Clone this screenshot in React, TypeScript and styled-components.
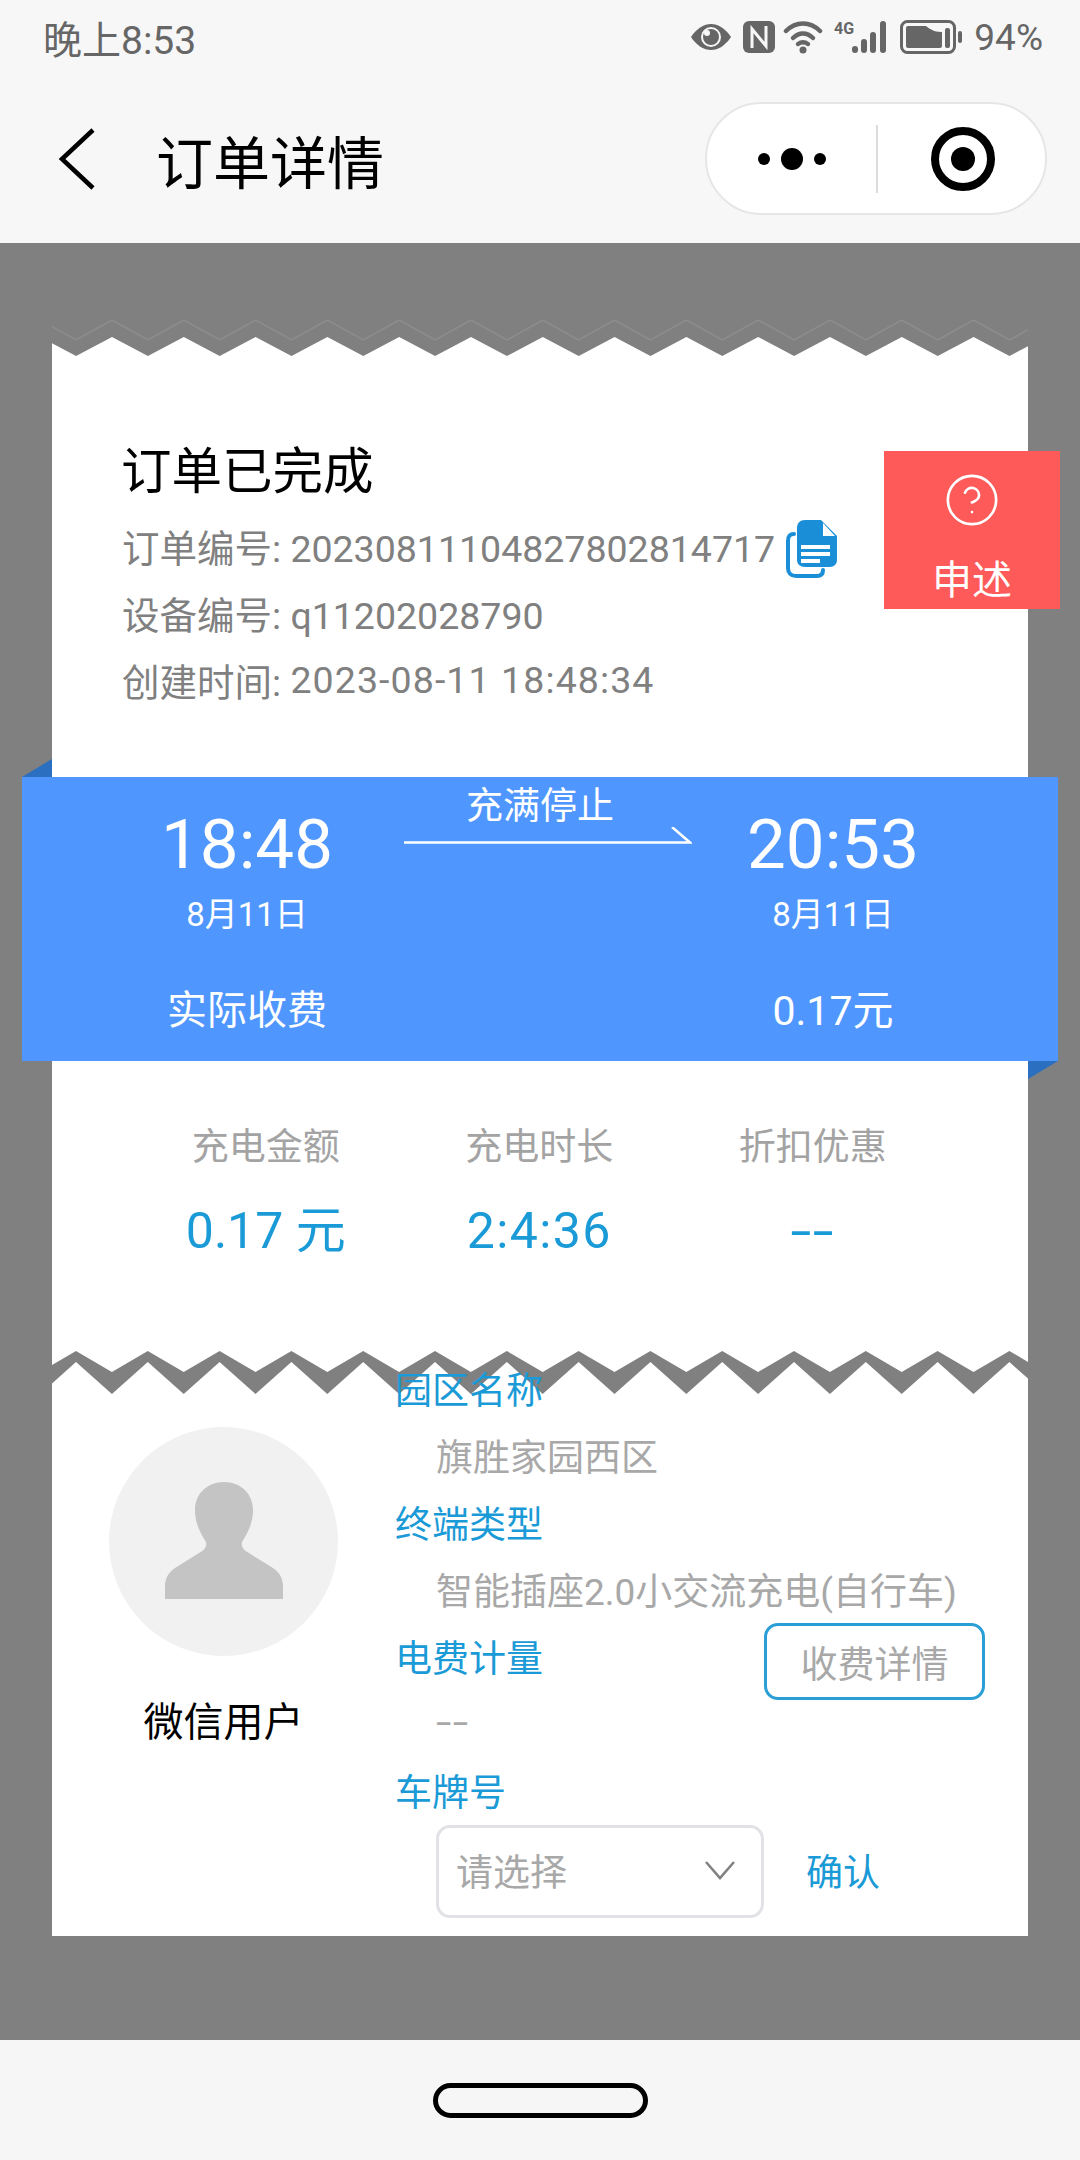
import styled, { createGlobalStyle } from 'styled-components';
import { CircleHelp } from 'lucide-react';

const GlobalStyle = createGlobalStyle`
  html, body {
    margin: 0;
    padding: 0;
    background: #808080;
  }

  * {
    box-sizing: border-box;
  }
`;

const FONT = `Roboto, "Noto Sans CJK SC", sans-serif`;
const ACCENT = '#1a9ad6';

const Page = styled.div`
  width: 1080px;
  height: 2160px;
  display: flex;
  flex-direction: column;
  font-family: ${FONT};
  overflow: hidden;
`;

const Header = styled.header`
  height: 243px;
  background: #f7f7f7;
`;

const StatusBar = styled.div`
  height: 74px;
  padding: 0 37px 0 43px;
  display: flex;
  justify-content: space-between;
  align-items: center;
  color: #666;
`;

const Clock = styled.span`
  font-size: 39px;
`;

const StatusIcons = styled.div`
  display: flex;
  align-items: center;
`;

const Battery = styled.span`
  font-size: 37px;
  margin-left: 10px;
`;

const NavBar = styled.div`
  height: 169px;
  padding: 0 33px 0 58px;
  display: flex;
  align-items: center;
`;

const NavTitle = styled.h1`
  margin: 0 0 0 60px;
  flex: 1;
  font-size: 57px;
  font-weight: 400;
  color: #000;
`;

const Capsule = styled.div`
  width: 342px;
  height: 113px;
  border: 2px solid #e6e6e6;
  border-radius: 57px;
  background: #fff;
  display: flex;
  align-items: center;
`;

const CapsuleCell = styled.div<{ $divider?: boolean }>`
  width: 50%;
  height: 68px;
  display: flex;
  justify-content: center;
  align-items: center;
  ${(props) => props.$divider && 'border-left: 2px solid #dcdcdc;'}
`;

const Main = styled.main`
  flex: 1;
  background: #808080;
  padding: 77px 52px 0;
`;

const Sheet = styled.div`
  position: relative;
  width: 976px;
`;

const TornEdge = styled.svg`
  display: block;
`;

const Summary = styled.section`
  background: #fff;
  padding: 86px 70px 64px;
`;

const OrderTitle = styled.h2`
  margin: 0 0 10px -1px;
  font-size: 50.5px;
  line-height: 60px;
  font-weight: 400;
  color: #000;
`;

const InfoLine = styled.div`
  display: flex;
  align-items: center;
  height: 67px;
  font-size: 37.5px;
  color: #808080;
  white-space: pre;
`;

const TrackedValue = styled.span`
  letter-spacing: 1.1px;
`;

const CopyIcon = styled.svg`
  margin: 6px 0 0 11px;
  flex: none;
`;

const ComplaintBadge = styled.div`
  position: absolute;
  left: 832px;
  top: 131px;
  width: 176px;
  height: 158px;
  background: #ff5a5a;
  color: #fff;
  font-size: 40px;
  display: flex;
  flex-direction: column;
  align-items: center;
  justify-content: space-between;
  padding: 20px 0 5px;
  line-height: 46px;
`;

const TimeBand = styled.section`
  position: relative;
  margin: 0 -30px;
  padding: 10px 75px 25px;
  height: 284px;
  background: #4f97ff;
  color: #fff;
  display: grid;
  grid-template-columns: 300px minmax(0, 1fr) 300px;
  grid-template-rows: auto auto;
  text-align: center;

  &::before,
  &::after {
    content: '';
    position: absolute;
    width: 30px;
    height: 18px;
    background: #2a6fc0;
  }

  &::before {
    left: 0;
    top: -18px;
    clip-path: polygon(100% 0, 100% 100%, 0 100%);
  }

  &::after {
    right: 0;
    bottom: -18px;
    clip-path: polygon(0 0, 100% 0, 0 100%);
  }
`;

const TimeColumn = styled.div`
  padding-top: 24px;
`;

const TimeText = styled.div`
  font-size: 69px;
  line-height: 68px;
`;

const DateText = styled.div`
  margin-top: 16px;
  font-size: 33px;
  line-height: 40px;
`;

const StopColumn = styled.div`
  font-size: 37px;
  line-height: 40px;
  white-space: nowrap;
`;

const Arrow = styled.svg`
  display: block;
  margin-left: 7px;
`;

const FeeText = styled.div<{ $size: number }>`
  margin-top: 51px;
  font-size: ${(props) => props.$size}px;
  line-height: 50px;
`;

const Stats = styled.section`
  background: #fff;
  padding: 67px 77px 90px;
  display: grid;
  grid-template-columns: repeat(3, 273.5px);
  text-align: center;
`;

const StatLabel = styled.div`
  font-size: 37px;
  line-height: 40px;
  color: #a3a3a3;
`;

const StatValue = styled.div<{ $tracking?: number }>`
  margin-top: 33px;
  font-size: 50px;
  line-height: 60px;
  color: ${ACCENT};
  letter-spacing: ${(props) => props.$tracking ?? 0}px;
`;

// the reference draws its dashes wider than the hyphen of this font
const WideDashes = styled.span<{ $left?: boolean }>`
  display: inline-block;
  transform: scaleX(1.5);
  transform-origin: ${(props) => (props.$left ? 'left' : 'center')} center;
  letter-spacing: 1px;
`;

const Details = styled.section`
  position: relative;
  margin-top: -40px;
  padding-bottom: 18px;
  display: flex;
`;

const DetailsBackdrop = styled.div`
  background: #fff;
`;

const UserColumn = styled.div`
  width: 343px;
  padding: 73px 0 0 57px;
`;

const Avatar = styled.div`
  width: 229px;
  height: 229px;
  border-radius: 50%;
  background: #f1f1f1;
  display: flex;
  justify-content: center;
  align-items: flex-end;
  padding-bottom: 56px;
`;

const UserName = styled.div`
  width: 229px;
  margin-top: 42px;
  text-align: center;
  font-size: 40px;
  line-height: 50px;
  color: #000;
`;

const FieldColumn = styled.div`
  width: 590px;
`;

const FieldRow = styled.div`
  height: 67px;
  display: flex;
  justify-content: space-between;
  align-items: center;
  font-size: 37px;
`;

const FieldLabel = styled.span`
  color: ${ACCENT};
`;

const FieldValue = styled.span`
  margin-left: 41px;
  color: #a8a8a8;
  white-space: nowrap;
`;

const FeeButton = styled.button`
  width: 221px;
  height: 77px;
  margin-top: 12px;
  padding: 0;
  border: 3px solid #2a9fd6;
  border-radius: 14px;
  background: #fff;
  color: #a8a8a8;
  font: inherit;
`;

const PlateRow = styled.div`
  margin: 2px 0 0 41px;
  display: flex;
  align-items: center;
  font-size: 37px;
`;

const PlateSelect = styled.div`
  width: 328px;
  height: 93px;
  padding: 0 26px 3px 17px;
  border: 3px solid #e2e2e6;
  border-radius: 14px;
  display: flex;
  justify-content: space-between;
  align-items: center;
  color: #a8a8a8;
`;

const ConfirmLink = styled.span`
  margin: 0 0 3px 42px;
  color: ${ACCENT};
`;

const Footer = styled.footer`
  height: 120px;
  background: #f6f6f6;
  display: flex;
  justify-content: center;
  align-items: center;
`;

const HomePill = styled.div`
  width: 215px;
  height: 35px;
  border: 5px solid #000;
  border-radius: 18px;
`;

const SHEET_WIDTH = 976;
const TOOTH = 71.8;

// triangle wave across the sheet, with a peak at x = phase
const zigzag = (peakY: number, valleyY: number, phase: number) => {
  const edgeY = (x: number) => {
    const d = (((x - phase) % TOOTH) + TOOTH) % TOOTH;
    return peakY + ((valleyY - peakY) * Math.min(d, TOOTH - d)) / (TOOTH / 2);
  };
  const xs = [0];
  for (let x = phase % (TOOTH / 2); x < SHEET_WIDTH; x += TOOTH / 2) {
    if (x > 0) xs.push(x);
  }
  xs.push(SHEET_WIDTH);
  return xs.map((x) => `${x.toFixed(1)},${edgeY(x).toFixed(1)}`);
};

function TopEdge() {
  const white = zigzag(17, 36, 60);
  const faint = zigzag(0, 20, 60);
  return (
    <TornEdge width={SHEET_WIDTH} height="36" viewBox="0 0 976 36">
      <polyline points={faint.join(' ')} fill="none" stroke="#8d8d8d" strokeWidth="1.5" />
      <polygon points={`${white.join(' ')} 976,36 0,36`} fill="#fff" />
    </TornEdge>
  );
}

function MiddleEdge() {
  const top = zigzag(0, 21, 24);
  const bottom = zigzag(11, 43, 24);
  return (
    <TornEdge width={SHEET_WIDTH} height="43" viewBox="0 0 976 43">
      <rect width="976" height="43" fill="#fff" />
      <polygon points={`${top.join(' ')} ${[...bottom].reverse().join(' ')}`} fill="#808080" />
    </TornEdge>
  );
}

function EyeIcon() {
  return (
    <svg width="42" height="28" viewBox="0 0 42 28">
      <path d="M1 14C7 5 14 1 21 1s14 4 20 13c-6 9-13 13-20 13S7 23 1 14z" fill="#666" />
      <circle cx="21" cy="14" r="10" fill="#f7f7f7" />
      <circle cx="21" cy="14" r="8" fill="#666" />
      <circle cx="17" cy="10" r="3" fill="#f7f7f7" />
    </svg>
  );
}

function NfcIcon() {
  return (
    <svg width="32" height="32" viewBox="0 0 32 32" style={{ marginLeft: 11 }}>
      <rect width="32" height="32" rx="6" fill="#666" />
      <path d="M9 27V8l14 17V5" fill="none" stroke="#f7f7f7" strokeWidth="3" />
    </svg>
  );
}

function WifiIcon() {
  return (
    <svg width="42" height="34" viewBox="0 0 42 34" style={{ marginLeft: 8 }}>
      <g fill="none" stroke="#666" strokeWidth="4.5" strokeLinecap="round">
        <path d="M3 11C13 1 27 1 37 11" />
        <path d="M10 18c6-6 14-6 20 0" />
        <path d="M15 24c3-2 7-2 10 0" />
      </g>
      <circle cx="20" cy="30" r="3.5" fill="#666" />
    </svg>
  );
}

function SignalIcon() {
  return (
    <svg width="56" height="34" viewBox="0 0 56 34" style={{ marginLeft: 9 }}>
      <text x="0" y="14" fontFamily="Roboto, sans-serif" fontSize="16" fontWeight="700" fill="#666">
        4G
      </text>
      <g fill="#666">
        <rect x="18" y="26" width="6" height="7" rx="3" />
        <rect x="27" y="19" width="6" height="14" rx="3" />
        <rect x="36" y="12" width="6" height="21" rx="3" />
        <rect x="46" y="1" width="6" height="32" rx="3" />
      </g>
    </svg>
  );
}

function BatteryIcon() {
  return (
    <svg width="64" height="34" viewBox="0 0 64 34" style={{ marginLeft: 10 }}>
      <rect x="1.5" y="1.5" width="53" height="31" rx="6" fill="none" stroke="#666" strokeWidth="3" />
      <rect x="6" y="6" width="36" height="22" rx="2" fill="#666" />
      <path d="M26 6h18v6c-8 0-12-1-18-6z" fill="#f7f7f7" />
      <rect x="45" y="8" width="5" height="20" rx="2" fill="#666" />
      <rect x="58" y="11" width="4" height="12" rx="2" fill="#666" />
    </svg>
  );
}

function FileCopyIcon() {
  return (
    <CopyIcon width="52" height="58" viewBox="0 0 52 58">
      <path d="M8 14C3 14 2 17 2 21v27c0 5 3 8 8 8h21c4 0 6-2 6-6" fill="none" stroke="#1a8fd8" strokeWidth="4" strokeLinecap="round" />
      <path d="M19 0h16l16 16v24c0 4-3 7-7 7H19c-5 0-8-3-8-7V8c0-5 3-8 8-8z" fill="#1a8fd8" />
      <path d="M37 3l12 13H37z" fill="#fff" />
      <rect x="15" y="25" width="29" height="4" fill="#fff" />
      <rect x="15" y="32" width="29" height="4" fill="#fff" />
      <rect x="15" y="39" width="19" height="4" fill="#fff" />
    </CopyIcon>
  );
}

export default function App() {
  return (
    <Page>
      <GlobalStyle />
      <Header>
        <StatusBar>
          <Clock>晚上8:53</Clock>
          <StatusIcons>
            <EyeIcon />
            <NfcIcon />
            <WifiIcon />
            <SignalIcon />
            <BatteryIcon />
            <Battery>94%</Battery>
          </StatusIcons>
        </StatusBar>
        <NavBar>
          <svg width="38" height="62" viewBox="0 0 38 62">
            <polyline points="35,2 4,31 35,60" fill="none" stroke="#000" strokeWidth="4.5" />
          </svg>
          <NavTitle>订单详情</NavTitle>
          <Capsule>
            <CapsuleCell>
              <svg width="68" height="24" viewBox="0 0 68 24">
                <circle cx="6" cy="12" r="6" />
                <circle cx="34" cy="12" r="11" />
                <circle cx="62" cy="12" r="6" />
              </svg>
            </CapsuleCell>
            <CapsuleCell $divider>
              <svg width="66" height="66" viewBox="0 0 66 66" style={{ marginLeft: 3 }}>
                <circle cx="33" cy="33" r="28" fill="none" stroke="#000" strokeWidth="8" />
                <circle cx="33" cy="33" r="12" />
              </svg>
            </CapsuleCell>
          </Capsule>
        </NavBar>
      </Header>

      <Main>
        <Sheet>
          <TopEdge />
          <Summary>
            <OrderTitle>订单已完成</OrderTitle>
            <InfoLine>
              订单编号: 20230811104827802814717
              <FileCopyIcon />
            </InfoLine>
            <InfoLine>设备编号: q11202028790</InfoLine>
            <InfoLine>
              创建时间: <TrackedValue>2023-08-11 18:48:34</TrackedValue>
            </InfoLine>
          </Summary>
          <ComplaintBadge>
            <CircleHelp size={58} strokeWidth={1.1} />
            <span>申述</span>
          </ComplaintBadge>

          <TimeBand>
            <TimeColumn>
              <TimeText>18:48</TimeText>
              <DateText>8月11日</DateText>
            </TimeColumn>
            <StopColumn>
              充满停止
              <Arrow width="288" height="22" viewBox="0 0 288 22">
                <path d="M0 15.5H286L268 0" fill="none" stroke="#fff" strokeWidth="2.5" />
              </Arrow>
            </StopColumn>
            <TimeColumn>
              <TimeText>20:53</TimeText>
              <DateText>8月11日</DateText>
            </TimeColumn>
            <FeeText $size={40}>实际收费</FeeText>
            <div />
            <FeeText $size={41}>0.17元</FeeText>
          </TimeBand>

          <Stats>
            <div>
              <StatLabel>充电金额</StatLabel>
              <StatValue>0.17 元</StatValue>
            </div>
            <div>
              <StatLabel>充电时长</StatLabel>
              <StatValue $tracking={1.4}>2:4:36</StatValue>
            </div>
            <div>
              <StatLabel>折扣优惠</StatLabel>
              <StatValue>
                <WideDashes>--</WideDashes>
              </StatValue>
            </div>
          </Stats>

          <MiddleEdge />

          <DetailsBackdrop>
            <Details>
              <UserColumn>
                <Avatar>
                  <svg width="118" height="118" viewBox="0 0 118 118">
                    <path
                      d="M59 0C76 0 88 12 88 28C88 42 82 52 77 60C76 64 78 68 84 71L108 86C114 90 118 96 118 104V117H0V104C0 96 4 90 10 86L34 71C40 68 42 64 41 60C36 52 30 42 30 28C30 12 42 0 59 0Z"
                      fill="#c4c4c4"
                    />
                  </svg>
                </Avatar>
                <UserName>微信用户</UserName>
              </UserColumn>
              <FieldColumn>
                <FieldRow>
                  <FieldLabel>园区名称</FieldLabel>
                </FieldRow>
                <FieldRow>
                  <FieldValue>旗胜家园西区</FieldValue>
                </FieldRow>
                <FieldRow>
                  <FieldLabel>终端类型</FieldLabel>
                </FieldRow>
                <FieldRow>
                  <FieldValue>智能插座2.0小交流充电(自行车)</FieldValue>
                </FieldRow>
                <FieldRow>
                  <FieldLabel>电费计量</FieldLabel>
                  <FeeButton type="button">收费详情</FeeButton>
                </FieldRow>
                <FieldRow>
                  <FieldValue>
                    <WideDashes $left>--</WideDashes>
                  </FieldValue>
                </FieldRow>
                <FieldRow>
                  <FieldLabel>车牌号</FieldLabel>
                </FieldRow>
                <PlateRow>
                  <PlateSelect>
                    请选择
                    <svg width="30" height="20" viewBox="0 0 30 20">
                      <polyline points="1,2 15,18 29,2" fill="none" stroke="#808080" strokeWidth="2.5" />
                    </svg>
                  </PlateSelect>
                  <ConfirmLink>确认</ConfirmLink>
                </PlateRow>
              </FieldColumn>
            </Details>
          </DetailsBackdrop>
        </Sheet>
      </Main>

      <Footer>
        <HomePill />
      </Footer>
    </Page>
  );
}
